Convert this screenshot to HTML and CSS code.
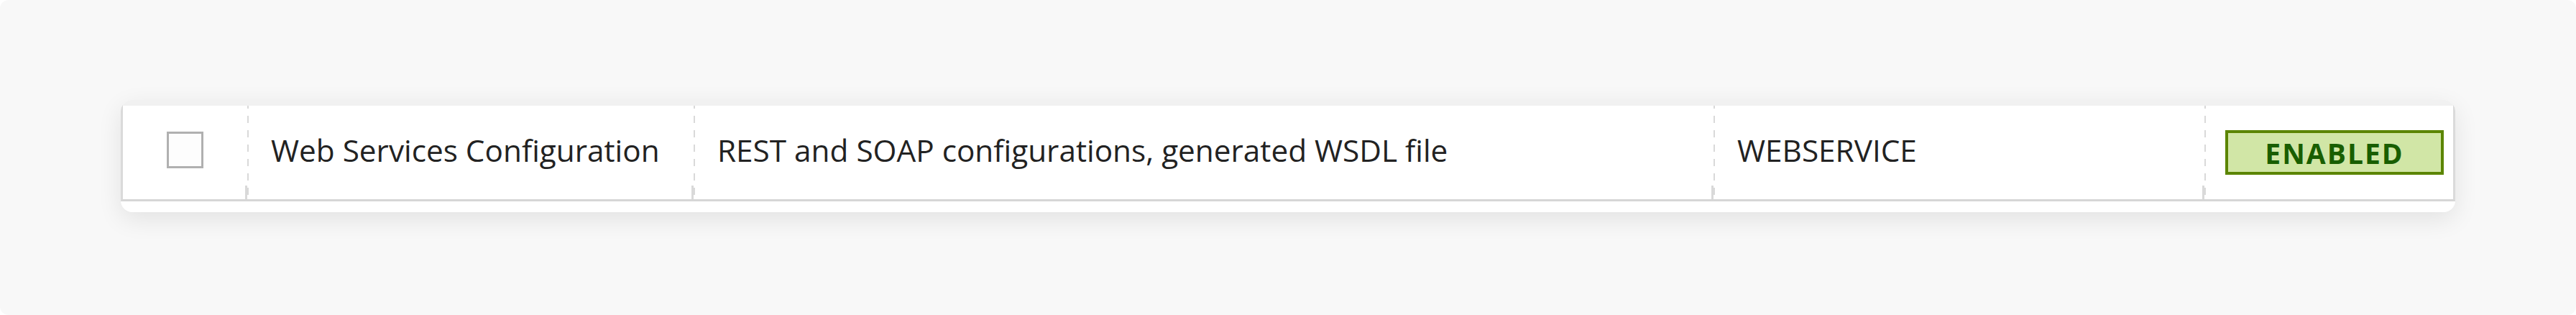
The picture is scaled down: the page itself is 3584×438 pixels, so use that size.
FILE: index.html
```html
<!DOCTYPE html>
<html lang="en">
<head>
    <meta charset="UTF-8">
    <meta name="viewport" content="width=device-width, initial-scale=1.0">
    <title>Modules</title>
    <link rel="stylesheet" href="styles.css">
</head>
<body>
    <div class="page">
        <div class="card">
            <div class="module-row">
                <div class="cell cell-check">
                    <span class="checkbox"></span>
                </div>
                <div class="cell">Web Services Configuration</div>
                <div class="cell">REST and SOAP configurations, generated WSDL file</div>
                <div class="cell">WEBSERVICE</div>
                <div class="cell cell-status">
                    <span class="badge">ENABLED</span>
                </div>
            </div>
        </div>
    </div>
</body>
</html>
```

FILE: styles.css
```css
html, body { margin: 0; background-color: #ffffff; }
body { font-family: "Open Sans", "Liberation Sans", sans-serif; }

.page {
    background-color: #f8f8f8;
    border-radius: 12px;
    height: 438px;
    box-sizing: border-box;
    padding: 139px 168px 0;
}

/* Card holding the table row */
.card {
    background-color: #ffffff;
    border-radius: 16px;
    overflow: hidden;
    padding-bottom: 15px;
    box-shadow: 0 10px 34px rgba(0, 0, 0, 0.09);
}

.module-row {
    display: grid;
    grid-template-columns: 173px 621px 1419px 683px 1fr;
    height: 141px;
    box-sizing: border-box;
    border: 3px solid #dadada;
    border-top: 8px solid #f1f1f1;
    border-bottom-color: #d6d6d6;
}

.cell {
    position: relative;
    display: flex;
    align-items: center;
    padding: 0 33px 8px;
    font-size: 42.3px;
    color: #222222;
    white-space: nowrap;
}

/* dashed column separators */
.cell + .cell {
    background-image: linear-gradient(to bottom, #d9d9d9 50%, transparent 50%);
    background-size: 2px 20px;
    background-position: left -6px;
    background-repeat: repeat-y;
}

.cell + .cell::after {
    content: '';
    position: absolute;
    left: -3px;
    bottom: 0;
    width: 3px;
    height: 19px;
    background-color: #d9d9d9;
}

.cell-check {
    justify-content: center;
    padding: 0 0 8px;
}

.checkbox {
    width: 51px;
    height: 51px;
    box-sizing: border-box;
    border: 3px solid #b0b0b0;
    background-color: #fdfdfd;
}

.cell-status {
    padding-left: 29px;
    padding-bottom: 0;
}

.badge {
    display: flex;
    align-items: center;
    justify-content: center;
    width: 304px;
    height: 62px;
    box-sizing: border-box;
    border: 4px solid #5b8500;
    background-color: #d1e6a6;
    color: #195e00;
    font-weight: bold;
    font-size: 39px;
    letter-spacing: 2px;
}
```
